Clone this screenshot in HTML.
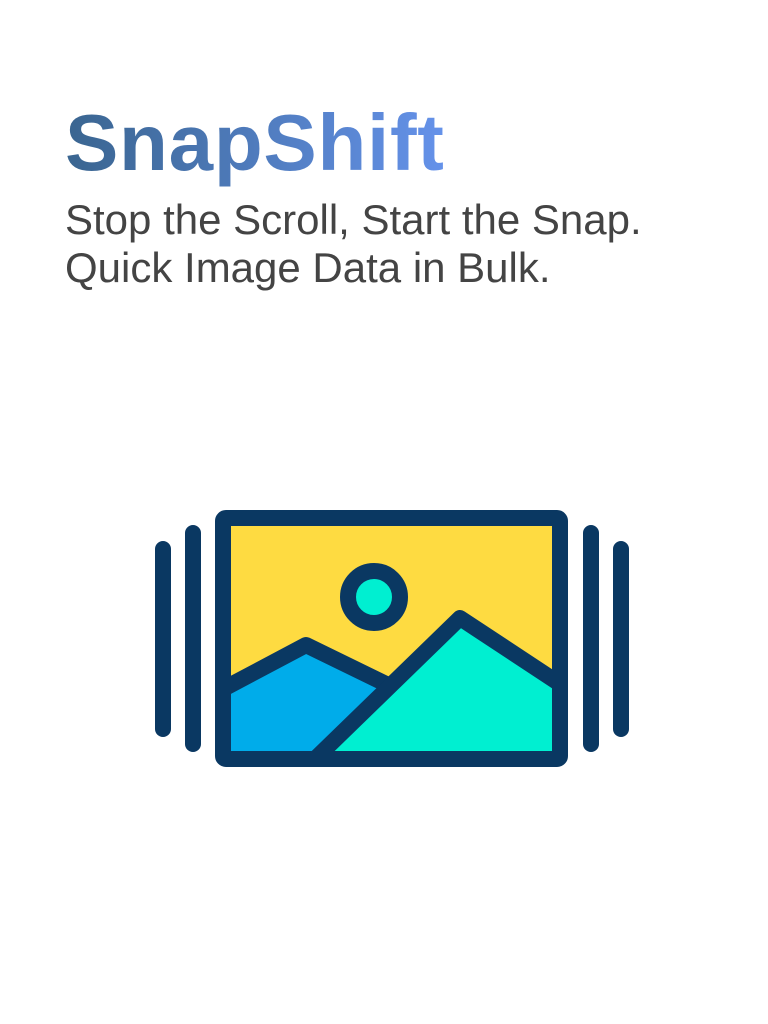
<!DOCTYPE html>
<html><head><meta charset="utf-8"><style>
html,body{margin:0;padding:0;background:#fff;width:768px;height:1024px;overflow:hidden}
h1{position:absolute;left:65px;top:95px;margin:0;font:bold 80px/96px "Liberation Sans",sans-serif;
background:linear-gradient(90deg,#3a6590,#6592ea);-webkit-background-clip:text;background-clip:text;color:transparent;letter-spacing:0.7px}
p{position:absolute;left:65px;top:196px;margin:0;font:42px/48px "Liberation Sans",sans-serif;color:#444}
svg{position:absolute;left:0;top:0}
</style></head><body>
<h1>SnapShift</h1>
<p>Stop the Scroll, Start the Snap.<br>Quick Image Data in Bulk.</p>
<svg width="768" height="1024" viewBox="0 0 768 1024">
<g stroke="#0a3862" stroke-width="16" stroke-linecap="round" stroke-linejoin="round" fill="none">
<line x1="163" y1="549" x2="163" y2="729"/>
<line x1="193" y1="533" x2="193" y2="744"/>
<line x1="591" y1="533" x2="591" y2="744"/>
<line x1="621" y1="549" x2="621" y2="729"/>
</g>
<rect x="223" y="518" width="337" height="241" fill="#fedb41"/>
<path d="M223 689 L306 645 L388 685 L315 759 L223 759Z" fill="#00acea"/>
<path d="M315 759 L460 618 L560 682 L560 759Z" fill="#00efd1"/>
<circle cx="374" cy="597" r="26" fill="#00efd1" stroke="#0a3862" stroke-width="16"/>
<g stroke="#0a3862" stroke-width="16" stroke-linejoin="round" stroke-linecap="round" fill="none">
<path d="M223 689 L306 645 L388 685"/>
<path d="M315 759 L460 618 L560 684"/>
<rect x="223" y="518" width="337" height="241" rx="3"/>
</g>
</svg>
</body></html>
